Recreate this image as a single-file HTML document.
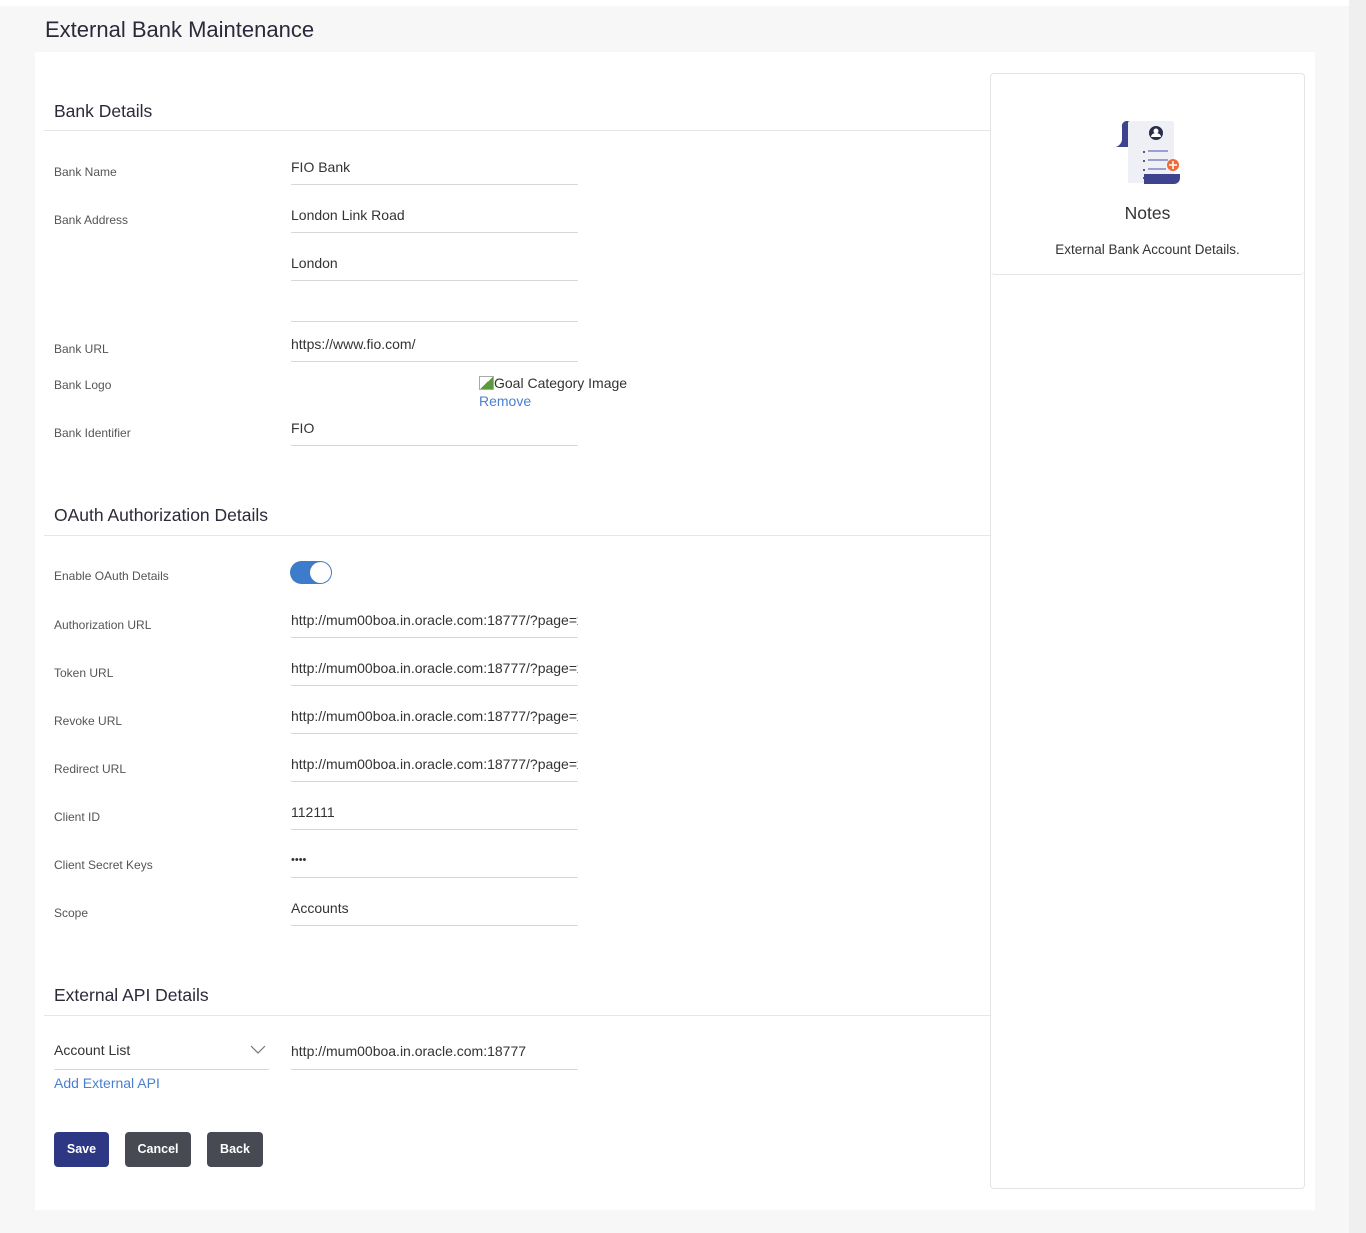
<!DOCTYPE html>
<html><head><meta charset="utf-8"><style>
*{margin:0;padding:0;box-sizing:border-box}
body{width:1366px;height:1233px;background:#f7f7f7;font-family:"Liberation Sans",sans-serif;position:relative;overflow:hidden;color:#333}
.a{position:absolute;white-space:nowrap}
.lbl{position:absolute;left:54px;font-size:12px;color:#555;line-height:14px}
.val{position:absolute;left:291px;width:287px;font-size:14px;color:#333;overflow:hidden;white-space:nowrap;line-height:18px}
.ln{position:absolute;height:1px;background:#d8d8d8}
.h{position:absolute;left:54px;font-size:17.5px;color:#2a2a3a;line-height:22px}
.btn{position:absolute;top:1132px;height:35px;border-radius:4px;color:#fff;font-size:12.5px;font-weight:bold;text-align:center;line-height:35px}
</style></head><body>
<div class="a" style="left:0;top:0;width:1366px;height:6px;background:#fff"></div>
<div class="a" style="left:1349px;top:0;width:17px;height:1233px;background:#efefef"></div>
<div class="a" style="left:45px;top:17px;font-size:22px;color:#2a2a3a">External Bank Maintenance</div>
<div class="a" style="left:35px;top:52px;width:1280px;height:1158px;background:#fff"></div>
<div class="a" style="left:990px;top:73px;width:315px;height:1116px;border:1px solid #e4e4e4;border-radius:4px"></div>
<div class="a" style="left:991px;top:73px;width:313px;height:202px;border-bottom:1px solid #e4e4e4;border-radius:4px"></div>
<svg class="a" style="left:1110px;top:118px" width="74" height="68" viewBox="0 0 74 68">
<path d="M16 3h4a6 6 0 0 1 6 6v20H3a8 8 0 0 0 9-8V9a5 5 0 0 1 4-6z" fill="#3e4390"/>
<rect x="18" y="3" width="46" height="62" rx="2" fill="#eef0f6"/>
<circle cx="46" cy="15" r="7" fill="#2a2d4a"/><circle cx="46" cy="13" r="2.5" fill="#fff"/><path d="M41 19a5 4 0 0 1 10 0z" fill="#fff"/>
<g fill="#2a2d4a"><circle cx="34" cy="34" r="1"/><circle cx="34" cy="43" r="1"/><circle cx="34" cy="52" r="1"/><circle cx="34" cy="60" r="1"/></g>
<g fill="#9a9fd0"><rect x="38" y="32" width="20" height="2"/><rect x="38" y="41" width="20" height="2"/><rect x="38" y="50" width="18" height="2"/><rect x="38" y="58" width="18" height="2"/></g>
<path d="M34 66h30a6 6 0 0 0 6-6v-4H34z" fill="#3e4390"/>
<circle cx="63" cy="47" r="6" fill="#ef6b3a"/><path d="M63 43v8M59 47h8" stroke="#fff" stroke-width="1.5"/>
</svg>
<div class="a" style="left:991px;width:313px;top:203px;text-align:center;font-size:17.5px;color:#333">Notes</div>
<div class="a" style="left:991px;width:313px;top:242px;text-align:center;font-size:13.5px;color:#333">External Bank Account Details.</div>

<div class="h" style="top:100px">Bank Details</div>
<div class="ln" style="left:44px;width:946px;top:130px;background:#e6e6e6"></div>
<div class="lbl" style="top:165px">Bank Name</div><div class="val" style="top:158px">FIO Bank</div><div class="ln" style="left:291px;width:287px;top:184px"></div>
<div class="lbl" style="top:213px">Bank Address</div><div class="val" style="top:206px">London Link Road</div><div class="ln" style="left:291px;width:287px;top:232px"></div>
<div class="val" style="top:254px">London</div><div class="ln" style="left:291px;width:287px;top:280px"></div>
<div class="ln" style="left:291px;width:287px;top:321px"></div>
<div class="lbl" style="top:342px">Bank URL</div><div class="val" style="top:335px">https://www.fio.com/</div><div class="ln" style="left:291px;width:287px;top:361px"></div>
<div class="lbl" style="top:378px">Bank Logo</div>
<div class="a" style="left:479px;top:375px;font-size:14px;color:#333"><span style="display:inline-block;width:15px;height:14px;border:1px solid #aaa;background:linear-gradient(135deg,#fff 50%,#5a9a3a 50%);vertical-align:-2px"></span>Goal Category Image</div>
<div class="a" style="left:479px;top:393px;font-size:14px;color:#4a7fd0">Remove</div>
<div class="lbl" style="top:426px">Bank Identifier</div><div class="val" style="top:419px">FIO</div><div class="ln" style="left:291px;width:287px;top:445px"></div>

<div class="h" style="top:504px">OAuth Authorization Details</div>
<div class="ln" style="left:44px;width:946px;top:535px;background:#e6e6e6"></div>
<div class="lbl" style="top:569px">Enable OAuth Details</div>
<div class="a" style="left:290px;top:561px;width:42px;height:23px;border-radius:12px;background:#3f7bcb"></div>
<div class="a" style="left:310px;top:562px;width:21px;height:21px;border-radius:50%;background:#fff"></div>
<div class="lbl" style="top:618px">Authorization URL</div><div class="val" style="top:611px">http://mum00boa.in.oracle.com:18777/?page=x</div><div class="ln" style="left:291px;width:287px;top:637px"></div>
<div class="lbl" style="top:666px">Token URL</div><div class="val" style="top:659px">http://mum00boa.in.oracle.com:18777/?page=x</div><div class="ln" style="left:291px;width:287px;top:685px"></div>
<div class="lbl" style="top:714px">Revoke URL</div><div class="val" style="top:707px">http://mum00boa.in.oracle.com:18777/?page=x</div><div class="ln" style="left:291px;width:287px;top:733px"></div>
<div class="lbl" style="top:762px">Redirect URL</div><div class="val" style="top:755px">http://mum00boa.in.oracle.com:18777/?page=x</div><div class="ln" style="left:291px;width:287px;top:781px"></div>
<div class="lbl" style="top:810px">Client ID</div><div class="val" style="top:803px">112111</div><div class="ln" style="left:291px;width:287px;top:829px"></div>
<div class="lbl" style="top:858px">Client Secret Keys</div><div class="val" style="top:851px;font-size:11px">••••</div><div class="ln" style="left:291px;width:287px;top:877px"></div>
<div class="lbl" style="top:906px">Scope</div><div class="val" style="top:899px">Accounts</div><div class="ln" style="left:291px;width:287px;top:925px"></div>

<div class="h" style="top:984px">External API Details</div>
<div class="ln" style="left:44px;width:946px;top:1015px;background:#e6e6e6"></div>
<div class="a" style="left:54px;top:1042px;font-size:14px;color:#333">Account List</div>
<svg class="a" style="left:250px;top:1045px" width="16" height="10"><path d="M1 1l7 7 7-7" fill="none" stroke="#777" stroke-width="1.2"/></svg>
<div class="ln" style="left:54px;width:215px;top:1069px"></div>
<div class="val" style="top:1042px">http://mum00boa.in.oracle.com:18777</div><div class="ln" style="left:291px;width:287px;top:1069px"></div>
<div class="a" style="left:54px;top:1075px;font-size:14px;color:#4a7fd0">Add External API</div>
<div class="btn" style="left:54px;width:55px;background:#2e3784">Save</div>
<div class="btn" style="left:125px;width:66px;background:#474a52">Cancel</div>
<div class="btn" style="left:207px;width:56px;background:#474a52">Back</div>
</body></html>
